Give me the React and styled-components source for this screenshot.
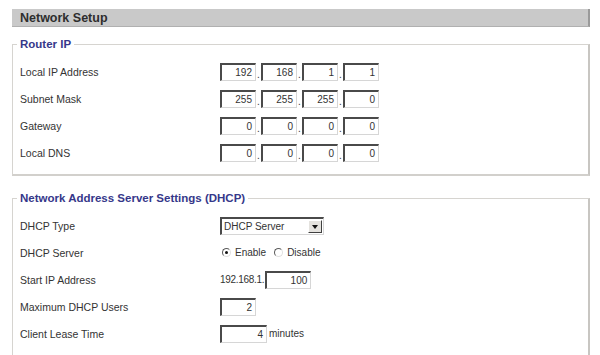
import React from "react";
import styled, { createGlobalStyle } from "styled-components";

const GlobalStyle = createGlobalStyle`
  html, body {
    margin: 0;
    padding: 0;
    background: #ffffff;
    overflow: hidden;
  }
  body {
    font-family: "Liberation Sans", Arial, sans-serif;
    color: #333;
  }
`;

const routerRows = [
  { label: "Local IP Address", octets: ["192", "168", "1", "1"] },
  { label: "Subnet Mask", octets: ["255", "255", "255", "0"] },
  { label: "Gateway", octets: ["0", "0", "0", "0"] },
  { label: "Local DNS", octets: ["0", "0", "0", "0"] },
];

const App = () => {
  return (
    <Page>
      <GlobalStyle />
      <TitleBar>Network Setup</TitleBar>

      <Section>
        <Legend>Router IP</Legend>
        {routerRows.map((row) => (
          <Row key={row.label}>
            <Label>{row.label}</Label>
            <Control>
              {row.octets.map((o, i) => (
                <React.Fragment key={i}>
                  {i > 0 && <Dot>.</Dot>}
                  <TextBox $width={36}>{o}</TextBox>
                </React.Fragment>
              ))}
            </Control>
          </Row>
        ))}
      </Section>

      <Section $gap={15}>
        <Legend>Network Address Server Settings (DHCP)</Legend>
        <Row>
          <Label>DHCP Type</Label>
          <Control>
            <SelectBox>
              <span>DHCP Server</span>
              <ArrowButton />
            </SelectBox>
          </Control>
        </Row>
        <Row>
          <Label>DHCP Server</Label>
          <Control>
            <RadioOption>
              <Radio $checked />
              Enable
            </RadioOption>
            <RadioOption>
              <Radio />
              Disable
            </RadioOption>
          </Control>
        </Row>
        <Row>
          <Label>Start IP Address</Label>
          <Control>
            <Prefix>192.168.1.</Prefix>
            <TextBox $width={46}>100</TextBox>
          </Control>
        </Row>
        <Row>
          <Label>Maximum DHCP Users</Label>
          <Control>
            <TextBox $width={36}>2</TextBox>
          </Control>
        </Row>
        <Row>
          <Label>Client Lease Time</Label>
          <Control>
            <TextBox $width={47}>4</TextBox>
            <Unit>minutes</Unit>
          </Control>
        </Row>
      </Section>
    </Page>
  );
};

export default App;

const Page = styled.div`
  padding: 9px 10px 0 12px;
`;

const TitleBar = styled.div`
  height: 18px;
  line-height: 18px;
  box-sizing: border-box;
  padding-left: 8px;
  background: #c9c9c9;
  border-right: 2px solid #9a9a9a;
  border-bottom: 1px solid #b0b0b0;
  font-size: 12.5px;
  font-weight: bold;
  color: #2e2e2e;
`;

const Section = styled.fieldset`
  margin: ${(p) => p.$gap || 10}px 0 0 0;
  padding: 7px 7px 8px 7px;
  border: 1px solid #d6d4d0;
  border-right: 2px solid #c8c6c2;
  border-bottom: 2px solid #d2d0cc;
  min-width: 0;
`;

const Legend = styled.legend`
  padding: 0 3px;
  margin-left: -3px;
  font-size: 11.5px;
  line-height: 14px;
  font-weight: bold;
  color: #36388a;
`;

const Row = styled.div`
  display: flex;
  align-items: center;
  height: 27px;
`;

const Label = styled.div`
  width: 200px;
  flex-shrink: 0;
  font-size: 10.5px;
  color: #333;
`;

const Control = styled.div`
  display: flex;
  align-items: center;
  font-size: 10.5px;
  color: #333;
`;

const TextBox = styled.div`
  box-sizing: border-box;
  width: ${(p) => p.$width}px;
  height: 18px;
  line-height: 15px;
  padding-right: 3px;
  text-align: right;
  font-size: 10px;
  color: #333;
  background: #fff;
  border-top: 2px solid #4a4a4a;
  border-left: 2px solid #4a4a4a;
  border-right: 1px solid #d6d6d6;
  border-bottom: 1px solid #d6d6d6;
`;

const Dot = styled.span`
  width: 5px;
  align-self: flex-end;
  text-align: center;
  font-size: 10px;
  line-height: 10px;
  margin-bottom: 1px;
`;

const SelectBox = styled.div`
  box-sizing: border-box;
  width: 104px;
  height: 18px;
  display: flex;
  align-items: center;
  justify-content: space-between;
  padding: 0 1px 0 2px;
  font-size: 10px;
  background: #fff;
  border-top: 2px solid #4a4a4a;
  border-left: 2px solid #4a4a4a;
  border-right: 1px solid #d6d6d6;
  border-bottom: 1px solid #d6d6d6;
`;

const ArrowButton = styled.span`
  position: relative;
  box-sizing: border-box;
  width: 14px;
  height: 13px;
  background: #e4e2de;
  border-top: 1px solid #fff;
  border-left: 1px solid #fff;
  border-right: 1px solid #404040;
  border-bottom: 1px solid #404040;

  &::after {
    content: "";
    position: absolute;
    left: 3px;
    top: 4px;
    border-left: 3.5px solid transparent;
    border-right: 3.5px solid transparent;
    border-top: 4px solid #111;
  }
`;

const RadioOption = styled.label`
  display: flex;
  align-items: center;
  gap: 4px;
  margin-left: 2px;
  margin-right: 6px;
  font-size: 10px;
`;

const Radio = styled.span`
  position: relative;
  box-sizing: border-box;
  width: 9px;
  height: 9px;
  border-radius: 50%;
  background: #fff;
  border: 1.5px solid;
  border-color: #5a5a5a #e0e0e0 #e0e0e0 #5a5a5a;

  &::after {
    content: "";
    display: ${(p) => (p.$checked ? "block" : "none")};
    position: absolute;
    left: 1.5px;
    top: 1.5px;
    width: 3px;
    height: 3px;
    border-radius: 50%;
    background: #111;
  }
`;

const Prefix = styled.span`
  font-size: 10px;
  letter-spacing: -0.3px;
  margin-right: 1px;
`;

const Unit = styled.span`
  margin-left: 2px;
  font-size: 10px;
`;
